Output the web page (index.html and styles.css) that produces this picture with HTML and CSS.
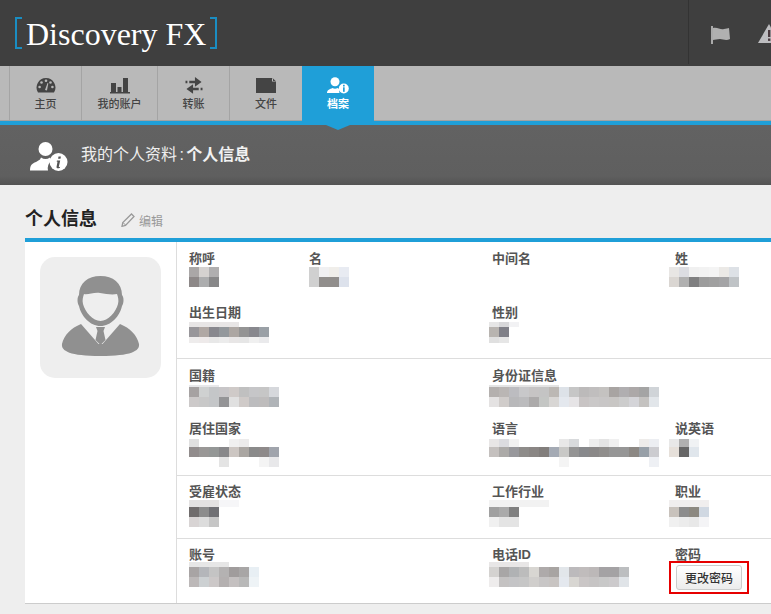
FILE: index.html
```html
<!DOCTYPE html>
<html lang="zh">
<head>
<meta charset="utf-8">
<title>Discovery FX</title>
<link rel="stylesheet" href="styles.css">
</head>
<body>
<header class="top">
  <div class="logo"><span class="br br-l"></span><span class="logo-text">Discovery FX</span><span class="br br-r"></span></div>
  <div class="top-icons">
    <svg class="flag" width="20" height="20" viewBox="0 0 20 20"><rect x="0" y="1" width="2" height="18" fill="#aaa"/><path d="M2 3c5-1 7 2 11 1 2 0 4-1 5-1l1 11c-4 2-7 0-10 0-3 0-5 1-7 1z" fill="#b0b0b0"/></svg>
    <svg class="warn" width="24" height="20" viewBox="0 0 24 20"><path d="M11 0 22 19H0z" fill="#bdbdc0"/><rect x="10" y="6" width="2.4" height="7" fill="#4a3a3f"/><rect x="10" y="14.5" width="2.4" height="2.4" fill="#4a3a3f"/></svg>
  </div>
</header>
<nav class="nav">
  <a class="tab tab-w72">
    <svg width="20" height="17" viewBox="0 0 20 17"><path d="M10 1a9.500 9.500 0 0 0-8 14.500h16A9.500 9.500 0 0 0 10 1z" fill="#444"/><g fill="#b9b9b9"><circle cx="5.500" cy="5.500" r="1.300"/><circle cx="10" cy="3.800" r="1.300"/><circle cx="14.500" cy="5.500" r="1.300"/><circle cx="3.600" cy="10" r="1.300"/><circle cx="16.400" cy="10" r="1.300"/><path d="M9 13l2.500-7 .8.300L11 13.500z"/></g></svg>
    <span>主页</span>
  </a>
  <a class="tab tab-w76">
    <svg width="20" height="17" viewBox="0 0 20 17"><path d="M1 6h5v9H1zM7.500 10h4v5h-4zM13 1h5v14h-5z" fill="#444"/><rect x="0" y="15" width="20" height="1.500" fill="#444"/></svg>
    <span>我的账户</span>
  </a>
  <a class="tab tab-w72">
    <svg width="20" height="18" viewBox="0 0 20 18"><path d="M1 4h2v2.500H1zM5 4h6V0l7 5.200-7 5v-3.700H5zM17 11.500h2V14h-2zM15 14H9v3.700L2 12.700l7-5V11.500h6z" fill="#444"/></svg>
    <span>转账</span>
  </a>
  <a class="tab tab-w73">
    <svg width="20" height="15" viewBox="0 0 20 15"><path d="M0 0h16l4 3.500V15H0z" fill="#444"/><path d="M16 0l4 3.500h-4z" fill="#b9b9b9"/><path d="M17 0.500l2.500 2.500h-2.500z" fill="#444"/></svg>
    <span>文件</span>
  </a>
  <a class="tab tab-active">
    <svg width="22" height="17" viewBox="0 0 22 17"><circle cx="8" cy="4.800" r="4.500" fill="#fff"/><path d="M0 16c0-3 3-4 5.500-5 1.500 1 3.500 1 5 0l2 1.200A5.500 5.500 0 0 0 12.500 16z" fill="#fff"/><circle cx="16.800" cy="11.500" r="5" fill="#fff"/><rect x="16" y="7.800" width="1.700" height="1.700" fill="#1f9fd8"/><rect x="16" y="10.300" width="1.700" height="4.500" fill="#1f9fd8"/></svg>
    <span>档案</span>
  </a>
</nav>
<div class="blue-line"></div>
<section class="subhead">
  <svg class="sub-icon" width="38" height="30" viewBox="0 0 38 30"><circle cx="15.500" cy="8" r="7" fill="#fff"/><path d="M0 29.500c0-5.500 2-7 6-8.500l4-2.500 1-2c3 2 6 2 9 0l1 3.500a10 10 0 0 0-3 9.500z" fill="#fff"/><circle cx="28.500" cy="21" r="9" fill="#fff"/><path d="M28.500 15.500h2.400l-.4 2.200h-2.400zM27 19.500h3.200l-1.400 6.200c0 .5.500.5 1.300 0l-.2 1c-2 1-3.400.8-3.400-.7l1-5.300-.9-.2z" fill="#555"/></svg>
  <h1 class="sub-title">我的个人资料 : <b>个人信息</b></h1>
</section>
<main class="main">
  <div class="title-row">
    <h2 class="title">个人信息</h2>
    <svg class="pencil" width="14" height="14" viewBox="0 0 14 14"><path d="M10.500 1 13 3.500 4.500 12.500 1 13.300 1.800 9.500z" fill="none" stroke="#999" stroke-width="1.300"/><path d="M2 9.500 4.500 12" stroke="#999"/></svg>
    <span class="edit">编辑</span>
  </div>
  <div class="card">
    <aside class="side">
      <div class="tile">
        <svg width="121" height="121" viewBox="0 0 121 121">
          <path d="M39 38c0-12 9-19 21.500-19S82 26 82 38c2 2 2 8 0 11-2 10-11 20-21.500 20S41 59 39 49c-2-3-2-9 0-11z" fill="#909090"/>
          <path d="M44 37c4 1 10-2 16-1 6 1 12 2 17 1 1 3 2 6 1 10-2 8-10 17-17.500 17S45 55 43 47c-1-4 0-7 1-10z" fill="#eee"/>
          <path d="M41 67C31 71 24 78 22 87c-1 7 8 12 38.500 12S100 94 99 87c-2-9-9-16-19-20L62.500 87h-4z" fill="#909090"/>
          <path d="M56 70h9l-1.500 4 2 9-5 5-5-5 2-9z" fill="#909090"/>
        </svg>
      </div>
    </aside>
    <div class="info">
      <section class="grp grp-a">
        <div class="field"><h3 class="lab">称呼</h3>
          <svg class="mos" width="30" height="22"><rect y="1" fill="#aaa7a7"/><rect x="10" y="1" fill="#d5d2d0"/><rect x="20" y="1" fill="#b0afb0"/><rect y="11" fill="#8d8888"/><rect x="10" y="11" fill="#acadae"/><rect x="20" y="11" fill="#888889"/></svg></div>
        <div class="field"><h3 class="lab">名</h3>
          <svg class="mos" width="40" height="22"><rect y="1" fill="#d0d0d0"/><rect x="10" y="1" fill="#f0f0f2"/><rect x="20" y="1" fill="#f0eeea"/><rect x="30" y="1" fill="#e8ebf2"/><rect y="11" fill="#d0d0d0"/><rect x="10" y="11" fill="#918e8c"/><rect x="20" y="11" fill="#918e8c"/><rect x="30" y="11" fill="#dde2ec"/></svg></div>
        <div class="field"><h3 class="lab">中间名</h3></div>
        <div class="field"><h3 class="lab">姓</h3>
          <svg class="mos shift6" width="70" height="22"><rect y="1" fill="#e8e6e4"/><rect x="10" y="1" fill="#dcdde2"/><rect x="20" y="1" fill="#f0f0f0"/><rect x="30" y="1" fill="#f2f2f2"/><rect x="40" y="1" fill="#f4f4f4"/><rect x="50" y="1" fill="#ebe9e6"/><rect x="60" y="1" fill="#dde1e6"/><rect y="11" fill="#dad6d2"/><rect x="10" y="11" fill="#b0b0b0"/><rect x="20" y="11" fill="#7f7f80"/><rect x="30" y="11" fill="#9c9c9c"/><rect x="40" y="11" fill="#a0a0a0"/><rect x="50" y="11" fill="#a4a4a6"/><rect x="60" y="11" fill="#bfc3c6"/></svg></div>
        <div class="field wide"><h3 class="lab">出生日期</h3>
          <svg class="mos" width="80" height="23"><rect class="h5" y="2" width="50" fill="#e8e6e6"/><rect y="7" fill="#98969a"/><rect x="10" y="7" fill="#b0a8a4"/><rect x="20" y="7" fill="#88888e"/><rect x="30" y="7" fill="#93989c"/><rect x="40" y="7" fill="#aca6a2"/><rect x="50" y="7" fill="#949494"/><rect x="60" y="7" fill="#88888e"/><rect x="70" y="7" fill="#9aa0a6"/><rect class="h6" y="17" x="0" fill="#eeecec"/><rect class="h6" y="17" x="10" fill="#eeeaea"/><rect class="h6" y="17" x="20" fill="#e8e8e8"/><rect class="h6" y="17" x="30" fill="#ececec"/><rect class="h6" y="17" x="40" fill="#e8e6e6"/><rect class="h6" y="17" x="50" fill="#e6e6e6"/><rect class="h6" y="17" x="60" fill="#f0f0f0"/><rect class="h6" y="17" x="70" fill="#eaeaec"/></svg></div>
        <div class="field"><h3 class="lab">性别</h3>
          <svg class="mos shift3" width="30" height="23"><rect class="h5" y="2" fill="#e6e6e6"/><rect class="h5" x="10" y="2" fill="#d8d8da"/><rect class="h5" x="20" y="2" fill="#f2f2f4"/><rect y="7" fill="#b8b4b0"/><rect x="10" y="7" fill="#808088"/><rect class="h6" y="17" fill="#e0e0e0"/><rect class="h6" x="10" y="17" fill="#e6e6e6"/></svg></div>
      </section>
      <section class="grp grp-b">
        <div class="field wide"><h3 class="lab">国籍</h3>
          <svg class="mos" width="90" height="24"><rect class="h2" y="2" width="30" fill="#e8e8ea"/><rect y="4" fill="#a6a2a2"/><rect x="10" y="4" fill="#cfd1d1"/><rect x="20" y="4" fill="#c4c6c8"/><rect x="30" y="4" fill="#c8c6c8"/><rect x="40" y="4" fill="#cfcac8"/><rect x="50" y="4" fill="#c0c0c0"/><rect x="60" y="4" fill="#c6c6c8"/><rect x="70" y="4" fill="#c6c6c6"/><rect x="80" y="4" fill="#d6d8dc"/><rect y="14" fill="#ccc9c9"/><rect x="10" y="14" fill="#c8c8c8"/><rect x="20" y="14" fill="#c4c6c8"/><rect x="30" y="14" fill="#949496"/><rect x="40" y="14" fill="#e0e0e0"/><rect x="50" y="14" fill="#cfcac8"/><rect x="60" y="14" fill="#bcbcbe"/><rect x="70" y="14" fill="#bebcbc"/><rect x="80" y="14" fill="#b0b4b8"/></svg></div>
        <div class="field wide2"><h3 class="lab">身份证信息</h3>
          <svg class="mos shift3" width="170" height="24"><rect class="h2" y="2" width="70" fill="#e4e4e4"/><rect y="4" fill="#b4b0ae"/><rect x="10" y="4" fill="#bab6b4"/><rect x="20" y="4" fill="#bcbcc0"/><rect x="30" y="4" fill="#c8c8ca"/><rect x="40" y="4" fill="#c6c4c4"/><rect x="50" y="4" fill="#c4c4c4"/><rect x="60" y="4" fill="#bcb8b4"/><rect x="70" y="4" fill="#dde2e8"/><rect x="80" y="4" fill="#c6c6c6"/><rect x="90" y="4" fill="#bcbaba"/><rect x="100" y="4" fill="#c0bebe"/><rect x="110" y="4" fill="#c4c2c0"/><rect x="120" y="4" fill="#a8a4a2"/><rect x="130" y="4" fill="#b0aeb0"/><rect x="140" y="4" fill="#aca8a8"/><rect x="150" y="4" fill="#a4a4a4"/><rect x="160" y="4" fill="#d0d4d8"/><rect y="14" fill="#e4e2e2"/><rect x="10" y="14" fill="#d0ccca"/><rect x="20" y="14" fill="#b8b8ba"/><rect x="30" y="14" fill="#bbbbbd"/><rect x="40" y="14" fill="#acaaaa"/><rect x="50" y="14" fill="#c4c6c4"/><rect x="60" y="14" fill="#d8d6d4"/><rect x="70" y="14" fill="#e4e8ee"/><rect x="80" y="14" fill="#e6e4e6"/><rect x="90" y="14" fill="#c8c4c4"/><rect x="100" y="14" fill="#cac8c8"/><rect x="110" y="14" fill="#c8c6c6"/><rect x="120" y="14" fill="#c8c6c4"/><rect x="130" y="14" fill="#cccccc"/><rect x="140" y="14" fill="#d4d4d8"/><rect x="150" y="14" fill="#c4c2c0"/><rect x="160" y="14" fill="#e2e6ea"/></svg></div>
        <div class="field wide"><h3 class="lab">居住国家</h3>
          <svg class="mos" width="90" height="32"><rect class="h8" y="3" fill="#e0e0e0"/><rect class="h8" x="50" y="3" fill="#ecebeb"/><rect class="h8" x="40" y="3" fill="#f0f0f0"/><rect y="11" fill="#918c8c"/><rect x="10" y="11" fill="#999796"/><rect x="20" y="11" fill="#949796"/><rect x="30" y="11" fill="#88888a"/><rect x="40" y="11" fill="#ccc6c2"/><rect x="50" y="11" fill="#aaa6a2"/><rect x="60" y="11" fill="#8a8a8a"/><rect x="70" y="11" fill="#8e8a8a"/><rect x="80" y="11" fill="#a0a4ac"/><rect x="30" y="21" fill="#e4e4e4"/><rect x="70" y="21" fill="#f4f4f4"/><rect x="80" y="21" fill="#e8e8ea"/></svg></div>
        <div class="field"><h3 class="lab">语言</h3>
          <svg class="mos shift3" width="170" height="32"><rect class="h8" y="3" fill="#e8e6e6"/><rect class="h8" x="10" y="3" fill="#dcdce0"/><rect class="h8" x="20" y="3" fill="#f2f2f2"/><rect class="h8" x="70" y="3" fill="#e8e8e8"/><rect class="h8" x="80" y="3" fill="#d8dadc"/><rect class="h8" x="100" y="3" fill="#eeeeee"/><rect class="h8" x="110" y="3" fill="#e4e4e4"/><rect class="h8" x="120" y="3" fill="#f0f0f0"/><rect class="h8" x="150" y="3" fill="#eeecea"/><rect class="h8" x="160" y="3" fill="#eceef2"/><rect y="11" fill="#c4c0be"/><rect x="10" y="11" fill="#acaaa8"/><rect x="20" y="11" fill="#98989c"/><rect x="30" y="11" fill="#8e8c8a"/><rect x="40" y="11" fill="#8a8684"/><rect x="50" y="11" fill="#827e7c"/><rect x="60" y="11" fill="#a4aab4"/><rect x="70" y="11" fill="#c8c8c6"/><rect x="80" y="11" fill="#949494"/><rect x="90" y="11" fill="#88898c"/><rect x="100" y="11" fill="#8a8888"/><rect x="110" y="11" fill="#908e8c"/><rect x="120" y="11" fill="#969696"/><rect x="130" y="11" fill="#969696"/><rect x="140" y="11" fill="#8c8884"/><rect x="150" y="11" fill="#98a0a8"/><rect x="160" y="11" fill="#ccccd0"/><rect x="70" y="21" fill="#f4f4f4"/><rect x="160" y="21" fill="#eef0f4"/></svg></div>
        <div class="field"><h3 class="lab">说英语</h3>
          <svg class="mos shift6" width="30" height="24"><rect class="h8" y="3" fill="#e8e8e8"/><rect class="h8" x="10" y="3" fill="#b0b0b0"/><rect class="h8" x="20" y="3" fill="#f0f2f4"/><rect y="11" fill="#e6e0da"/><rect x="10" y="11" fill="#666"/><rect x="20" y="11" fill="#e0e6ec"/></svg></div>
      </section>
      <section class="grp grp-c">
        <div class="field wide"><h3 class="lab">受雇状态</h3>
          <svg class="mos" width="50" height="28"><rect class="h7" y="1" width="30" fill="#e4e2e2"/><rect class="h7" x="30" y="1" width="20" fill="#f6f6f8"/><rect y="8" fill="#706c6c"/><rect x="10" y="8" fill="#8c8c8c"/><rect x="20" y="8" fill="#707074"/><rect y="18" fill="#d8d4d4"/><rect x="10" y="18" fill="#dcdcdc"/><rect x="20" y="18" fill="#c6c6c6"/></svg></div>
        <div class="field"><h3 class="lab">工作行业</h3>
          <svg class="mos shift3" width="60" height="28"><rect class="h7" y="1" width="60" fill="#f2f2f2"/><rect y="8" fill="#a0a0a0"/><rect x="10" y="8" fill="#aaa"/><rect x="20" y="8" fill="#808080"/><rect y="18" fill="#f0f0f0"/><rect x="10" y="18" fill="#e4e4e4"/><rect x="20" y="18" fill="#e4e4e4"/></svg></div>
        <div class="field"><h3 class="lab">职业</h3>
          <svg class="mos shift6" width="40" height="28"><rect class="h7" y="1" width="40" fill="#f0eeee"/><rect y="8" fill="#c8c2bc"/><rect x="10" y="8" fill="#8c8c8c"/><rect x="20" y="8" fill="#8c8880"/><rect x="30" y="8" fill="#d0d8e2"/><rect y="18" fill="#f0f0f0"/><rect x="10" y="18" fill="#ececec"/><rect x="20" y="18" fill="#e8e8e8"/><rect x="30" y="18" fill="#f4f4f6"/></svg></div>
      </section>
      <section class="grp grp-d">
        <div class="field wide"><h3 class="lab">账号</h3>
          <svg class="mos" width="70" height="25"><rect class="h5" y="0" width="40" fill="#e6e6e6"/><rect y="5" fill="#a8a4a4"/><rect x="10" y="5" fill="#b4b6ba"/><rect x="20" y="5" fill="#c4c4c4"/><rect x="30" y="5" fill="#b4b2b2"/><rect x="40" y="5" fill="#a09c9c"/><rect x="50" y="5" fill="#a8a6a6"/><rect x="60" y="5" fill="#e8eff4"/><rect y="15" fill="#bcb8b8"/><rect x="10" y="15" fill="#ccd0d2"/><rect x="20" y="15" fill="#ccc8c8"/><rect x="30" y="15" fill="#b4b0b0"/><rect x="40" y="15" fill="#c4c0c0"/><rect x="50" y="15" fill="#b8b8b8"/><rect x="60" y="15" fill="#eef3f6"/></svg></div>
        <div class="field"><h3 class="lab">电话ID</h3>
          <svg class="mos shift3" width="140" height="25"><rect class="h5" y="0" width="40" fill="#e8e6e6"/><rect y="5" fill="#d4d2d0"/><rect x="10" y="5" fill="#a8a6a6"/><rect x="20" y="5" fill="#b0b2b4"/><rect x="30" y="5" fill="#bcbcbc"/><rect x="40" y="5" fill="#d8d6d2"/><rect x="50" y="5" fill="#aeaaaa"/><rect x="60" y="5" fill="#a8a4a2"/><rect x="70" y="5" fill="#e2e6ea"/><rect x="80" y="5" fill="#bcbabc"/><rect x="90" y="5" fill="#c0bcbc"/><rect x="100" y="5" fill="#bcb8b8"/><rect x="110" y="5" fill="#a4a2a4"/><rect x="120" y="5" fill="#a4a2a4"/><rect x="130" y="5" fill="#bcbec0"/><rect y="15" fill="#eeecec"/><rect x="10" y="15" fill="#c4c2c2"/><rect x="20" y="15" fill="#c4c4c6"/><rect x="30" y="15" fill="#c6c6c6"/><rect x="40" y="15" fill="#d0cecc"/><rect x="50" y="15" fill="#c8c6c6"/><rect x="60" y="15" fill="#c8c4c2"/><rect x="70" y="15" fill="#e4e8ee"/><rect x="80" y="15" fill="#d8d6d2"/><rect x="90" y="15" fill="#cac6c6"/><rect x="100" y="15" fill="#c6c4c4"/><rect x="110" y="15" fill="#c8c8c8"/><rect x="120" y="15" fill="#cccacc"/><rect x="130" y="15" fill="#e0e4e8"/></svg></div>
        <div class="field"><h3 class="lab">密码</h3>
          <div class="btn-wrap"><button class="btn" type="button">更改密码</button></div></div>
      </section>
    </div>
  </div>
</main>
</body>
</html>
```
FILE: styles.css
```css
html, body { margin: 0; padding: 0; height: 614px; overflow: hidden; }
body {
  width: 771px;
  background: #eee;
  font-family: "Liberation Sans", "Noto Sans CJK SC", sans-serif;
  color: #555;
}
h1, h2, h3 { margin: 0; }

.top { height: 66px; background: #3f3f3f; display: flex; overflow: hidden; }
.logo { display: flex; align-items: center; padding-left: 15px; width: 689px; flex: none; box-sizing: border-box; border-right: 1px solid #333; height: 64px; }
.logo-text { font-family: "Liberation Serif", serif; font-size: 32px; color: #fff; margin: 4px 4px 0; line-height: 34px; }
.br { display: block; width: 5px; height: 28px; border: 2px solid #1a8dc2; margin-top: 2px; }
.br-l { border-right: 0; }
.br-r { border-left: 0; }
.top-icons { display: flex; gap: 27px; padding: 25px 0 0 22px; }
.flag { flex: none; }
.warn { flex: none; margin-top: -1px; }

.nav { height: 54px; background: #b9b9b9; border-bottom: 1px solid #a2a2a2; display: flex; padding-left: 9px; }
.tab { box-sizing: border-box; height: 54px; border-left: 1px solid #a4a4a4; display: flex; flex-direction: column; align-items: center; justify-content: flex-start; padding-top: 11px; color: #444; font-size: 11px; line-height: 14px; font-weight: 500; }
.tab svg { display: block; height: 17px; margin-bottom: 3px; }
.tab-w72 { width: 72px; }
.tab-w76 { width: 76px; }
.tab-w73 { width: 73px; }
.tab-active { width: 72px; height: 55px; background: #1f9fd8; color: #fff; border-left: 0; font-weight: 700; position: relative; }
.tab-active::after { content: ""; position: absolute; left: 24px; top: 59px; border: solid transparent; border-width: 5px 12px 0; border-top-color: #1f9fd8; }

.blue-line { height: 4px; background: #1f9fd8; }
.subhead { height: 60px; box-sizing: border-box; background: linear-gradient(#626262, #5f5f5f 85%, #535353); display: flex; align-items: center; padding-left: 30px; gap: 13px; }
.sub-icon { flex: none; margin-top: 1px; }
.sub-title { font-size: 16px; font-weight: 400; color: #eee; line-height: 22px; word-spacing: -2px; }
.sub-title b { font-weight: 700; color: #f2f2f2; }

.main { padding: 22px 0 0 25px; background: #eee; }
.title-row { display: flex; align-items: center; height: 23px; margin-bottom: 8px; }
.title { font-size: 18px; line-height: 24px; font-weight: 700; color: #222; margin-right: 24px; }
.pencil { flex: none; margin: 3px 4px 0 0; }
.edit { font-size: 12px; color: #999; margin-top: 4px; }

.card { border-top: 4px solid #1f9fd8; border-bottom: 1px solid #ccc; background: #fff; display: flex; width: 746px; height: 366px; box-sizing: border-box; }
.side { width: 152px; flex: none; box-sizing: border-box; border-right: 1px solid #ddd; padding: 15px 0 0 15px; }
.tile { width: 121px; height: 121px; border-radius: 15px; background: #eee; }
.tile svg { display: block; }
.info { flex: 1; min-width: 0; }

.grp { display: grid; grid-template-columns: 120px 183px 183px 1fr; padding-left: 12px; border-bottom: 1px solid #ddd; box-sizing: border-box; }
.grp-a { height: 117px; padding-top: 10px; grid-auto-rows: 54px; }
.grp-b { height: 117px; padding-top: 10px; grid-auto-rows: 53px; }
.grp-c { height: 63px; padding-top: 9px; }
.grp-d { height: 64px; padding-top: 9px; border-bottom: 0; }
.field { min-width: 0; }
.wide { grid-column: 1 / span 2; }
.wide2 { grid-column: 3 / span 2; }
.lab { font-size: 13px; line-height: 14px; font-weight: 700; color: #555; }

.mos { display: block; overflow: visible; }
.mos rect { height: 10px; }
.mos rect:not([width]) { width: 10px; }
.mos .h2 { height: 2px; }
.mos .h5 { height: 5px; }
.mos .h6 { height: 6px; }
.mos .h7 { height: 7px; }
.mos .h8 { height: 8px; }
.shift3 { margin-left: -3px; }
.shift6 { margin-left: -6px; }

.btn-wrap { position: relative; width: 66px; height: 25px; margin: 3px 0 0 1px; }
.btn-wrap::after { content: ""; position: absolute; left: -7px; top: -4px; width: 76px; height: 29px; border: 2px solid #e60000; pointer-events: none; }
.btn { display: block; width: 66px; height: 25px; padding: 0; box-sizing: border-box; border: 1px solid #ccc; border-radius: 3px; background: linear-gradient(#fff, #ececec); font-family: inherit; font-size: 12px; font-weight: 500; color: #333; }
```
